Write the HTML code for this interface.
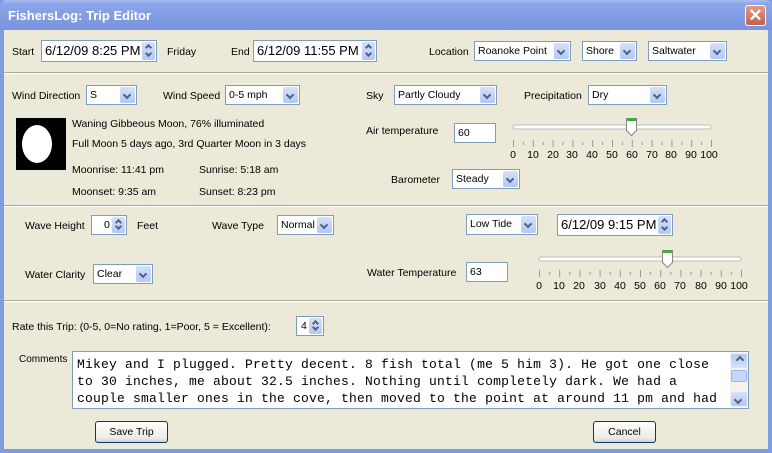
<!DOCTYPE html>
<html><head><meta charset="utf-8"><style>
*{box-sizing:border-box;margin:0;padding:0}
body{width:772px;height:453px;overflow:hidden;background:#7f9be2;font-family:"Liberation Sans",Tahoma,sans-serif;font-size:10.5px;color:#000;position:relative}
.t{position:absolute;white-space:nowrap;line-height:13px;margin-top:1px}
#title{position:absolute;left:0;top:0;width:772px;height:30px;background:linear-gradient(#a9bdf0 0,#8aa5e8 4px,#7f9ae2 20px,#7994de 30px);border-radius:7px 7px 0 0}
#title span{position:absolute;left:8px;top:8px;color:#fff;font-weight:bold;font-size:13px}
#close{position:absolute;left:745px;top:5px;width:21px;height:21px;border:1px solid #fff;border-radius:3px;background:linear-gradient(#e39a8c,#c2604c);color:#fff;font-size:17px;font-weight:bold;text-align:center;line-height:19px}
#client{position:absolute;left:4px;top:30px;width:764px;height:419px;background:#ece9d8}
.sep{position:absolute;left:4px;width:764px;height:2px;border-top:1px solid #aca899;border-bottom:1px solid #fff}
.box{position:absolute;background:#fff;border:1px solid #7f9db9;padding-left:3px;white-space:nowrap;overflow:hidden}
.cb .ar{position:absolute;right:1px;top:1px;bottom:1px;width:15px;background:linear-gradient(#d5e1fb,#b4c8f4);border-radius:2px}
.ar:after{content:"";position:absolute;left:4px;top:5px;width:4px;height:4px;border-right:2px solid #4d6185;border-bottom:2px solid #4d6185;transform:rotate(45deg)}
.sp .ar{position:absolute;right:1px;top:1px;bottom:1px;width:13px;background:linear-gradient(#d5e1fb,#b4c8f4);border-radius:2px}
.sp .ar:after{content:"";position:absolute;left:4px;top:3px;width:3px;height:3px;border:0;border-left:2px solid #4d6185;border-top:2px solid #4d6185;transform:rotate(45deg)}
.sp .ar:before{content:"";position:absolute;left:4px;bottom:4px;width:3px;height:3px;border-right:2px solid #4d6185;border-bottom:2px solid #4d6185;transform:rotate(45deg)}
.btn{position:absolute;border:1px solid #003c74;border-radius:3px;background:linear-gradient(#fff,#ecebe6 80%,#d6d0c5);text-align:center}
.mono{font-family:"Liberation Mono","Courier New",monospace}
</style></head><body>
<div id="title"><span>FishersLog: Trip Editor</span><div id="close">✕</div></div>
<div id="client"></div>
<div class="sep" style="top:72px"></div>
<div class="sep" style="top:205px"></div>
<div class="sep" style="top:300px"></div>

<div class="t" style="left:12px;top:45px">Start</div>
<div class="box sp" style="left:41px;top:40px;width:116px;height:22px;font-size:13px;line-height:19px">6/12/09 8:25 PM<div class="ar"></div></div>
<div class="t" style="left:167px;top:45px">Friday</div>
<div class="t" style="left:231px;top:45px">End</div>
<div class="box sp" style="left:253px;top:40px;width:124px;height:22px;font-size:13px;line-height:19px">6/12/09 11:55 PM<div class="ar"></div></div>
<div class="t" style="left:429px;top:45px">Location</div>
<div class="box cb" style="left:474px;top:41px;width:97px;height:20px;line-height:18px">Roanoke Point<div class="ar"></div></div>
<div class="box cb" style="left:582px;top:41px;width:55px;height:20px;line-height:18px">Shore<div class="ar"></div></div>
<div class="box cb" style="left:648px;top:41px;width:79px;height:20px;line-height:18px">Saltwater<div class="ar"></div></div>

<div class="t" style="left:12px;top:89px">Wind Direction</div>
<div class="box cb" style="left:86px;top:85px;width:51px;height:20px;line-height:18px">S<div class="ar"></div></div>
<div class="t" style="left:163px;top:89px">Wind Speed</div>
<div class="box cb" style="left:225px;top:85px;width:75px;height:20px;line-height:18px">0-5 mph<div class="ar"></div></div>
<div class="t" style="left:366px;top:89px">Sky</div>
<div class="box cb" style="left:394px;top:85px;width:103px;height:20px;line-height:18px">Partly Cloudy<div class="ar"></div></div>
<div class="t" style="left:524px;top:89px">Precipitation</div>
<div class="box cb" style="left:588px;top:85px;width:79px;height:20px;line-height:18px">Dry<div class="ar"></div></div>

<div style="position:absolute;left:16px;top:118px;width:50px;height:52px;background:#000"><div style="position:absolute;left:6px;top:7px;width:30px;height:38px;background:#fff;border-radius:50%"></div></div>
<div class="t" style="left:72px;top:117px">Waning Gibbeous Moon, 76% illuminated</div>
<div class="t" style="left:72px;top:137px">Full Moon 5 days ago, 3rd Quarter Moon in 3 days</div>
<div class="t" style="left:72px;top:163px">Moonrise: 11:41 pm</div>
<div class="t" style="left:199px;top:163px">Sunrise: 5:18 am</div>
<div class="t" style="left:72px;top:185px">Moonset: 9:35 am</div>
<div class="t" style="left:199px;top:185px">Sunset: 8:23 pm</div>

<div class="t" style="left:366px;top:124px">Air temperature</div>
<div class="box" style="left:454px;top:123px;width:42px;height:20px;line-height:18px">60</div>
<svg style="position:absolute;left:505px;top:115px" width="215" height="50">
<defs><pattern id="p1" x="8" y="0" width="19.8" height="50" patternUnits="userSpaceOnUse"><line x1="0.5" y1="25" x2="0.5" y2="32" stroke="#999"/><line x1="10.4" y1="27" x2="10.4" y2="30" stroke="#999"/></pattern></defs>
<rect x="8" y="10" width="198" height="4" rx="2" fill="#fff" stroke="#bbb"/>
<rect x="7" y="24" width="201" height="9" fill="url(#p1)"/>
<path d="M121.5 3.5h10v12l-5 5l-5-5z" fill="#fff" stroke="#888"/><rect x="122" y="3" width="9" height="3" fill="#3fae3f"/>
<g font-family="Liberation Sans,sans-serif" font-size="10.5" text-anchor="middle"><text x="8" y="43">0</text><text x="28" y="43">10</text><text x="48" y="43">20</text><text x="67" y="43">30</text><text x="87" y="43">40</text><text x="107" y="43">50</text><text x="127" y="43">60</text><text x="147" y="43">70</text><text x="166" y="43">80</text><text x="186" y="43">90</text><text x="204" y="43">100</text></g>
</svg>
<div class="t" style="left:391px;top:173px">Barometer</div>
<div class="box cb" style="left:452px;top:169px;width:68px;height:20px;line-height:18px">Steady<div class="ar"></div></div>

<div class="t" style="left:25px;top:219px">Wave Height</div>
<div class="box sp" style="left:91px;top:215px;width:36px;height:20px;line-height:18px;padding-left:12px">0<div class="ar"></div></div>
<div class="t" style="left:137px;top:219px">Feet</div>
<div class="t" style="left:212px;top:219px">Wave Type</div>
<div class="box cb" style="left:277px;top:215px;width:57px;height:20px;line-height:18px">Normal<div class="ar"></div></div>
<div class="box cb" style="left:466px;top:214px;width:72px;height:21px;line-height:19px">Low Tide<div class="ar"></div></div>
<div class="box sp" style="left:557px;top:214px;width:116px;height:22px;font-size:13px;line-height:19px">6/12/09 9:15 PM<div class="ar"></div></div>
<div class="t" style="left:25px;top:268px">Water Clarity</div>
<div class="box cb" style="left:93px;top:264px;width:60px;height:20px;line-height:18px">Clear<div class="ar"></div></div>
<div class="t" style="left:367px;top:266px">Water Temperature</div>
<div class="box" style="left:466px;top:262px;width:42px;height:20px;line-height:18px">63</div>
<svg style="position:absolute;left:531px;top:248px" width="220" height="45">
<defs><pattern id="p2" x="8" y="0" width="20.2" height="45" patternUnits="userSpaceOnUse"><line x1="0.5" y1="22" x2="0.5" y2="29" stroke="#999"/><line x1="10.6" y1="24" x2="10.6" y2="27" stroke="#999"/></pattern></defs>
<rect x="8" y="9" width="202" height="4" rx="2" fill="#fff" stroke="#bbb"/>
<rect x="7" y="21" width="205" height="9" fill="url(#p2)"/>
<path d="M131.5 2.5h10v12l-5 5l-5-5z" fill="#fff" stroke="#888"/><rect x="132" y="2" width="9" height="3" fill="#3fae3f"/>
<g font-family="Liberation Sans,sans-serif" font-size="10.5" text-anchor="middle"><text x="8" y="41">0</text><text x="28" y="41">10</text><text x="48" y="41">20</text><text x="69" y="41">30</text><text x="89" y="41">40</text><text x="109" y="41">50</text><text x="129" y="41">60</text><text x="149" y="41">70</text><text x="170" y="41">80</text><text x="190" y="41">90</text><text x="208" y="41">100</text></g>
</svg>

<div class="t" style="left:12px;top:320px">Rate this Trip: (0-5, 0=No rating, 1=Poor, 5 = Excellent):</div>
<div class="box sp" style="left:296px;top:316px;width:28px;height:20px;line-height:18px;padding-left:4px">4<div class="ar"></div></div>
<div class="t" style="left:19px;top:352px;font-size:10px">Comments</div>
<div class="box mono" style="left:72px;top:351px;width:677px;height:58px;font-size:13px;line-height:17px;padding:4px 0 0 4px;letter-spacing:0.2px">Mikey and I plugged. Pretty decent. 8 fish total (me 5 him 3). He got one close<br>to 30 inches, me about 32.5 inches. Nothing until completely dark. We had a<br>couple smaller ones in the cove, then moved to the point at around 11 pm and had
<div style="position:absolute;right:0;top:0;width:18px;height:56px;background:#f4f3ee">
<div class="cb" style="position:absolute;left:1px;top:1px;width:16px;height:16px"><div class="ar" style="transform:rotate(180deg);right:0;width:16px"></div></div>
<div style="position:absolute;left:1px;top:18px;width:16px;height:12px;background:#c6d5f8;border:1px solid #9cb4ee;border-radius:2px"></div>
<div class="cb" style="position:absolute;left:1px;top:39px;width:16px;height:16px"><div class="ar" style="right:0;width:16px"></div></div>
</div></div>
<div class="btn" style="left:95px;top:421px;width:73px;height:22px;line-height:20px">Save Trip</div>
<div class="btn" style="left:593px;top:421px;width:63px;height:22px;line-height:20px">Cancel</div>
</body></html>
